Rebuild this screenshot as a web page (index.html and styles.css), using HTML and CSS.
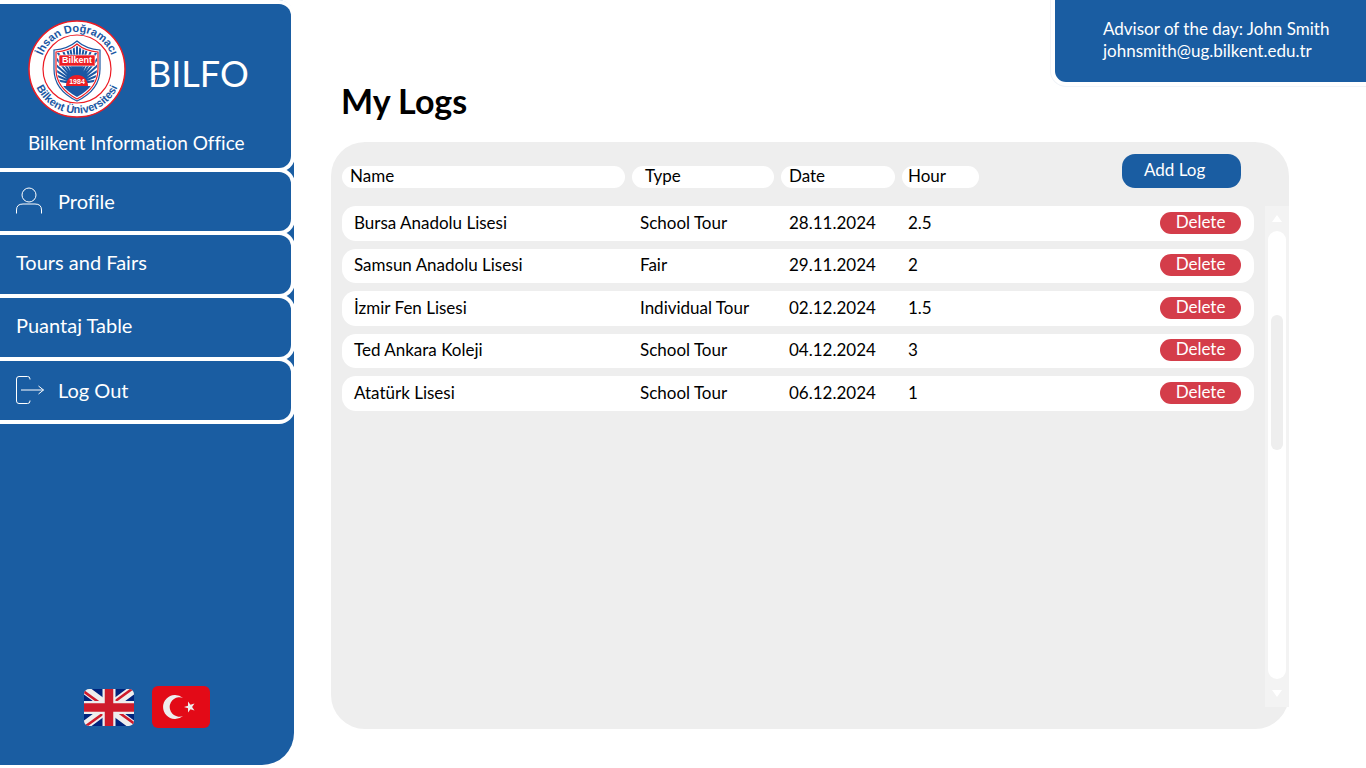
FILE: index.html
```html
<!DOCTYPE html>
<html lang="en">
<head>
<meta charset="utf-8">
<meta name="viewport" content="width=device-width, initial-scale=1">
<title>BILFO - My Logs</title>
<link rel="stylesheet" href="styles.css">
</head>
<body>
<div class="app">
  <aside class="sidebar">
    <div class="brand">
      <div class="brand-row">
        <svg class="logo" viewBox="0 0 98 98" role="img" aria-label="Bilkent University logo">
          <defs>
            <path id="arc-top" d="M12 49A37 37 0 0 1 86 49"/>
            <path id="arc-bottom" d="M4.500 49A44.500 44.500 0 0 0 93.500 49"/>
            <clipPath id="shield-clip"><path d="M29 33Q41 32 49 26Q57 32 69 33V49Q69 66 49 77Q29 66 29 49Z"/></clipPath>
          </defs>
          <circle cx="49" cy="49" r="48" fill="#fff" stroke="#ed1c24" stroke-width="1.500"/>
          <circle cx="49" cy="49" r="34" fill="#fff" stroke="#ed1c24" stroke-width="1.200"/>
          <path d="M26 30Q40 29 49 21Q58 29 72 30V49Q72 70 49 81Q26 70 26 49Z" fill="#fff" stroke="#1b57a3" stroke-width="1.200"/>
          <path d="M28 32Q41 31 49 24Q57 31 70 32V49Q70 68 49 79Q28 68 28 49Z" fill="#fff" stroke="#ed1c24" stroke-width="1.200"/>
          <g clip-path="url(#shield-clip)">
            <path d="M49 64L27 60M49 64L27 55M49 64L27 50M49 64L27 44M49 64L27 37M49 64L27 28M49 64L32 24M49 64L37 22M49 64L41 22M49 64L45 20M49 64V20M49 64L53 20M49 64L57 22M49 64L61 22M49 64L66 24M49 64L71 28M49 64L71 37M49 64L71 44M49 64L71 50M49 64L71 55M49 64L71 60" stroke="#1b57a3" stroke-width="2"/>
            <rect x="28" y="66" width="42" height="14" fill="#1b57a3"/>
          </g>
          <path d="M38 66A11 11 0 0 1 60 66Z" fill="#ed1c24"/>
          <rect x="31" y="35" width="36" height="11" fill="#ed1c24" stroke="#fff" stroke-width=".6"/>
          <text x="49" y="43" text-anchor="middle" class="logo-name">Bilkent</text>
          <text x="49" y="64" text-anchor="middle" class="logo-year">1984</text>
          <text class="logo-ring" text-anchor="middle"><textPath href="#arc-top" startOffset="50%">İhsan Doğramacı</textPath></text>
          <text class="logo-ring" text-anchor="middle"><textPath href="#arc-bottom" startOffset="50%">Bilkent Üniversitesi</textPath></text>
        </svg>
        <span class="brand-name">BILFO</span>
      </div>
      <p class="brand-sub">Bilkent Information Office</p>
    </div>
    <nav class="nav">
      <a class="nav-item" href="#profile">
        <svg class="nav-icon" viewBox="0 0 28 28" aria-hidden="true"><circle cx="13" cy="8" r="7"/><path d="M.5 26.500V23Q.5 17 7 17H19Q25.500 17 25.500 23V26.500"/></svg>
        Profile
      </a>
      <a class="nav-item nav-item-plain" href="#tours">Tours and Fairs</a>
      <a class="nav-item nav-item-plain" href="#puantaj">Puantaj Table</a>
      <a class="nav-item" href="#logout">
        <svg class="nav-icon" viewBox="0 0 28 28" aria-hidden="true"><path d="M14 3.500V3Q14 .5 11.500 .5H3Q.5 .5 .5 3V25Q.5 27.500 3 27.500H11.500Q14 27.500 14 25V24.500M5 14H27.500M22.500 10L27.500 14L22.500 18"/></svg>
        Log Out
      </a>
    </nav>
    <div class="languages">
      <button class="flag-button" type="button" aria-label="English">
        <svg class="flag-uk" viewBox="0 0 50 37" aria-hidden="true">
          <defs><clipPath id="uk-clip"><rect width="50" height="37" rx="5"/></clipPath></defs>
          <g clip-path="url(#uk-clip)">
            <rect width="50" height="37" fill="#00247d"/>
            <path d="M0 0L50 37M50 0L0 37" stroke="#eee" stroke-width="9"/>
            <path d="M-1 2L22 18.500M51 35L28 18.500M48 0L26 16M2 37L24 21" stroke="#cf1b2b" stroke-width="2.600"/>
            <path d="M25 0V37M0 18.500H50" stroke="#eee" stroke-width="13"/>
            <path d="M25 0V37M0 18.500H50" stroke="#cf1b2b" stroke-width="8.500"/>
          </g>
        </svg>
      </button>
      <button class="flag-button" type="button" aria-label="Türkçe">
        <svg class="flag-tr" viewBox="0 0 58 42" aria-hidden="true">
          <rect width="58" height="42" rx="6" fill="#e30a17"/>
          <path d="M31 12A12 12 0 1 0 31 30A9.700 9.700 0 1 1 31 12Z" fill="#eee"/>
          <path d="M32 21L36 19.700V15.500L38.500 18.800L42.500 17.500L40.100 21L42.500 24.500L38.500 23.200L36 26.500V22.300Z" fill="#eee"/>
        </svg>
      </button>
    </div>
  </aside>

  <main class="main">
    <header class="advisor">
      <p class="advisor-line">Advisor of the day: John Smith</p>
      <p class="advisor-line">johnsmith@ug.bilkent.edu.tr</p>
    </header>
    <h1 class="title">My Logs</h1>
    <section class="panel">
      <div class="table-area">
        <table class="logs">
          <colgroup><col class="col-name"><col class="col-type"><col class="col-date"><col class="col-hour"><col></colgroup>
          <thead>
            <tr>
              <th scope="col"><span class="pill">Name</span></th>
              <th scope="col"><span class="pill pill-type">Type</span></th>
              <th scope="col"><span class="pill">Date</span></th>
              <th scope="col"><span class="pill pill-hour">Hour</span></th>
              <th class="actions"><button class="add-button" type="button">Add Log</button></th>
            </tr>
          </thead>
          <tbody>
            <tr><td>Bursa Anadolu Lisesi</td><td>School Tour</td><td>28.11.2024</td><td class="hour">2.5</td><td class="actions"><button class="delete-button" type="button">Delete</button></td></tr>
            <tr><td>Samsun Anadolu Lisesi</td><td>Fair</td><td>29.11.2024</td><td class="hour">2</td><td class="actions"><button class="delete-button" type="button">Delete</button></td></tr>
            <tr><td>İzmir Fen Lisesi</td><td>Individual Tour</td><td>02.12.2024</td><td class="hour">1.5</td><td class="actions"><button class="delete-button" type="button">Delete</button></td></tr>
            <tr><td>Ted Ankara Koleji</td><td>School Tour</td><td>04.12.2024</td><td class="hour">3</td><td class="actions"><button class="delete-button" type="button">Delete</button></td></tr>
            <tr><td>Atatürk Lisesi</td><td>School Tour</td><td>06.12.2024</td><td class="hour">1</td><td class="actions"><button class="delete-button" type="button">Delete</button></td></tr>
          </tbody>
        </table>
      </div>
      <div class="scroller">
        <button class="scroll-arrow" type="button" aria-label="Scroll up"><svg class="arrow" viewBox="0 0 10 7" aria-hidden="true"><path d="M5 0L10 7H0Z"/></svg></button>
        <div class="scroll-track"><div class="scroll-thumb"></div></div>
        <button class="scroll-arrow" type="button" aria-label="Scroll down"><svg class="arrow" viewBox="0 0 10 7" aria-hidden="true"><path d="M0 0H10L5 7Z"/></svg></button>
      </div>
    </section>
  </main>
</div>
</body>
</html>
```
FILE: styles.css
```css
:root {
  --blue: #1a5da2;
  --red: #d43d4a;
  --grey: #eeeeee;
}

* { box-sizing: border-box; }

body {
  margin: 0;
  background: #fff;
  color: #000;
  font-family: Lato, "Open Sans", sans-serif;
  font-size: 17px;
  font-variant-ligatures: none;
  line-height: 22px;
}

button {
  border: 0;
  padding: 0;
  font: inherit;
  cursor: pointer;
}

.app {
  display: flex;
  min-height: 100vh;
}

/* Sidebar */
.sidebar {
  display: flex;
  flex-direction: column;
  flex: 0 0 294px;
  margin-bottom: 3px;
  padding-bottom: 37px;
  background: var(--blue);
  border-radius: 0 16px 32px 0;
  color: #fff;
}

.brand,
.nav-item {
  margin-right: -1px;
  border: 4px solid #fff;
  border-left: 0;
  border-radius: 0 16px 16px 0;
}

.brand {
  padding: 16px 0 13px 28px;
}

.brand-row {
  display: flex;
  align-items: center;
  gap: 22px;
}

.logo {
  width: 98px;
  height: 98px;
}

.logo-name,
.logo-year,
.logo-ring {
  font-family: "Liberation Sans", sans-serif;
  font-weight: bold;
}

.logo-name { font-size: 9px; fill: #fff; }
.logo-year { font-size: 7px; fill: #fff; }
.logo-ring { font-size: 11px; fill: #1b57a3; }

.brand-name {
  padding-top: 8px;
  font-size: 36px;
  line-height: 40px;
}

.brand-sub {
  margin: 13px 0 0;
  font-size: 19px;
  line-height: 24px;
}

.nav {
  display: flex;
  flex-direction: column;
}

.nav-item {
  display: flex;
  align-items: center;
  gap: 14px;
  min-height: 67px;
  margin-top: -4px;
  padding: 0 16px 2px;
  color: #fff;
  font-size: 20px;
  line-height: 24px;
  text-decoration: none;
}

.nav-item-plain { padding-bottom: 6px; }

.nav-icon {
  width: 28px;
  height: 28px;
  overflow: visible;
  fill: none;
  stroke: #fff;
  stroke-width: 1;
}

.languages {
  display: flex;
  align-items: center;
  justify-content: center;
  gap: 18px;
  margin-top: auto;
}

.flag-button {
  display: flex;
  background: none;
}

.flag-uk { width: 50px; height: 37px; }
.flag-tr { width: 58px; height: 42px; }

/* Main column */
.main {
  display: flex;
  flex: 1;
  flex-direction: column;
  min-width: 0;
  padding: 0 0 39px 37px;
}

.advisor {
  align-self: flex-end;
  padding: 18px 36px 20px 48px;
  min-width: 311px;
  background: var(--blue);
  border-radius: 0 0 0 11px;
  box-shadow: 0 0 0 4px #fff, 0 0 0 5px #f1f4f8;
  color: #fff;
}

.advisor-line {
  margin: 0;
}

.title {
  margin: 0 0 20px 10px;
  padding-bottom: 2px;
  font-size: 34px;
  line-height: 38px;
}

.panel {
  display: flex;
  flex: 1;
  gap: 11px;
  margin-right: 77px;
  padding-left: 11px;
  background: var(--grey);
  border-radius: 34px;
}

.table-area {
  flex: 1;
  min-width: 0;
  padding-top: 4px;
}

.logs {
  width: 100%;
  table-layout: fixed;
  border-collapse: separate;
  border-spacing: 0 8px;
}

.col-name { width: 290px; }
.col-type { width: 149px; }
.col-date { width: 121px; }
.col-hour { width: 84px; }

.logs th {
  padding: 0 0 10px;
  font-weight: normal;
  text-align: left;
  vertical-align: bottom;
}

.pill {
  display: block;
  margin-right: 7px;
  padding: 0 8px 2px;
  background: #fff;
  border-radius: 11px;
  line-height: 20px;
}

.pill-type { padding-left: 13px; }
.pill-hour { padding-left: 6px; }

.logs td {
  height: 34px;
  padding: 0 0 2px 8px;
  background: #fff;
}

.logs tr:nth-child(odd) td { height: 35px; }

.logs td:first-child {
  padding-left: 12px;
  border-radius: 14px 0 0 14px;
}

.logs td:last-child { border-radius: 0 14px 14px 0; }

.logs .hour { padding-left: 6px; }

.logs .actions {
  padding-right: 13px;
  text-align: right;
}

.add-button,
.delete-button {
  display: block;
  margin-left: auto;
  color: #fff;
}

.add-button {
  width: 119px;
  padding: 5px 22px 7px;
  background: var(--blue);
  border-radius: 13px;
  text-align: left;
}

.delete-button {
  width: 81px;
  padding-bottom: 2px;
  background: var(--red);
  border-radius: 11px;
  line-height: 20px;
}

/* Scroll bar */
.scroller {
  display: flex;
  flex-direction: column;
  width: 24px;
  margin: 64px 0 22px;
  padding: 0 3px;
  background: #f3f3f3;
}

.scroll-arrow {
  display: flex;
  align-items: center;
  justify-content: center;
  height: 25px;
  background: none;
}

.scroll-arrow:last-child { height: 28px; }

.arrow {
  width: 10px;
  height: 7px;
  fill: #fff;
}

.scroll-track {
  display: grid;
  flex: 1;
  grid-template-rows: 84fr 135fr 229fr;
  padding: 0 3px;
  background: #fff;
  border-radius: 9px;
}

.scroll-thumb {
  grid-row: 2;
  background: var(--grey);
  border-radius: 6px;
}
```
